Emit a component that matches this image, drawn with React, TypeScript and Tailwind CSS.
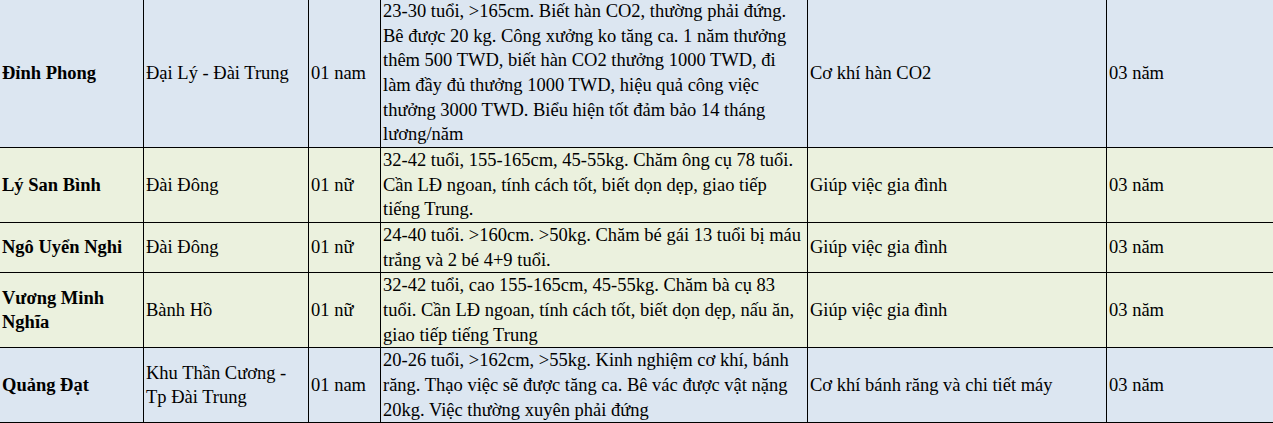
import React from "react";

interface Row {
  name: string[];
  place: string[];
  count: string;
  desc: string[];
  job: string;
  term: string;
  bg: string;
}

const rows: Row[] = [
  {
    name: ["Đỉnh Phong"],
    place: ["Đại Lý - Đài Trung"],
    count: "01 nam",
    desc: [
      "23-30 tuổi, >165cm. Biết hàn CO2, thường phải đứng.",
      "Bê được 20 kg. Công xưởng ko tăng ca. 1 năm thưởng",
      "thêm 500 TWD, biết hàn CO2 thưởng 1000 TWD, đi",
      "làm đầy đủ thưởng 1000 TWD, hiệu quả công việc",
      "thưởng 3000 TWD. Biểu hiện tốt đảm bảo 14 tháng",
      "lương/năm",
    ],
    job: "Cơ khí hàn CO2",
    term: "03 năm",
    bg: "bg-[#dce6f1]",
  },
  {
    name: ["Lý San Bình"],
    place: ["Đài Đông"],
    count: "01 nữ",
    desc: [
      "32-42 tuổi, 155-165cm, 45-55kg. Chăm ông cụ 78 tuổi.",
      "Cần LĐ ngoan, tính cách tốt, biết dọn dẹp, giao tiếp",
      "tiếng Trung.",
    ],
    job: "Giúp việc gia đình",
    term: "03 năm",
    bg: "bg-[#ebf1de]",
  },
  {
    name: ["Ngô Uyển Nghi"],
    place: ["Đài Đông"],
    count: "01 nữ",
    desc: [
      "24-40 tuổi. >160cm. >50kg. Chăm bé gái 13 tuổi bị máu",
      "trắng và 2 bé 4+9 tuổi.",
    ],
    job: "Giúp việc gia đình",
    term: "03 năm",
    bg: "bg-[#ebf1de]",
  },
  {
    name: ["Vương Minh", "Nghĩa"],
    place: ["Bành Hồ"],
    count: "01 nữ",
    desc: [
      "32-42 tuổi, cao 155-165cm, 45-55kg. Chăm bà cụ 83",
      "tuổi. Cần LĐ ngoan, tính cách tốt, biết dọn dẹp, nấu ăn,",
      "giao tiếp tiếng Trung",
    ],
    job: "Giúp việc gia đình",
    term: "03 năm",
    bg: "bg-[#ebf1de]",
  },
  {
    name: ["Quảng Đạt"],
    place: ["Khu Thần Cương -", "Tp Đài Trung"],
    count: "01 nam",
    desc: [
      "20-26 tuổi, >162cm, >55kg. Kinh nghiệm cơ khí, bánh",
      "răng. Thạo việc sẽ được tăng ca. Bê vác được vật nặng",
      "20kg. Việc thường xuyên phải đứng",
    ],
    job: "Cơ khí bánh răng và chi tiết máy",
    term: "03 năm",
    bg: "bg-[#dce6f1]",
  },
];

const Lines = ({ lines }: { lines: string[] }) => (
  <>
    {lines.map((l, i) => (
      <div key={i} className="whitespace-nowrap">
        {l}
      </div>
    ))}
  </>
);

const cell = "border border-black px-[2px] py-0 align-middle overflow-hidden";

const App = () => {
  return (
    <div className="w-[1273px] h-[423px] overflow-hidden bg-white">
      <table className="-mt-[2px] -ml-px border-collapse table-fixed w-[1400px] text-black text-[18.5px] leading-[24.67px] font-[family-name:Liberation_Serif,Times_New_Roman,serif]">
        <colgroup>
          <col className="w-[144px]" />
          <col className="w-[165px]" />
          <col className="w-[72px]" />
          <col className="w-[427px]" />
          <col className="w-[299px]" />
          <col className="w-[293px]" />
        </colgroup>
        <tbody>
          {rows.map((r, i) => (
            <tr key={i} className={r.bg}>
              <td className={`${cell} font-bold`}>
                <Lines lines={r.name} />
              </td>
              <td className={cell}>
                <Lines lines={r.place} />
              </td>
              <td className={`${cell} whitespace-nowrap`}>{r.count}</td>
              <td className={cell}>
                <Lines lines={r.desc} />
              </td>
              <td className={`${cell} whitespace-nowrap`}>{r.job}</td>
              <td className={`${cell} whitespace-nowrap`}>{r.term}</td>
            </tr>
          ))}
        </tbody>
      </table>
    </div>
  );
};

export default App;
